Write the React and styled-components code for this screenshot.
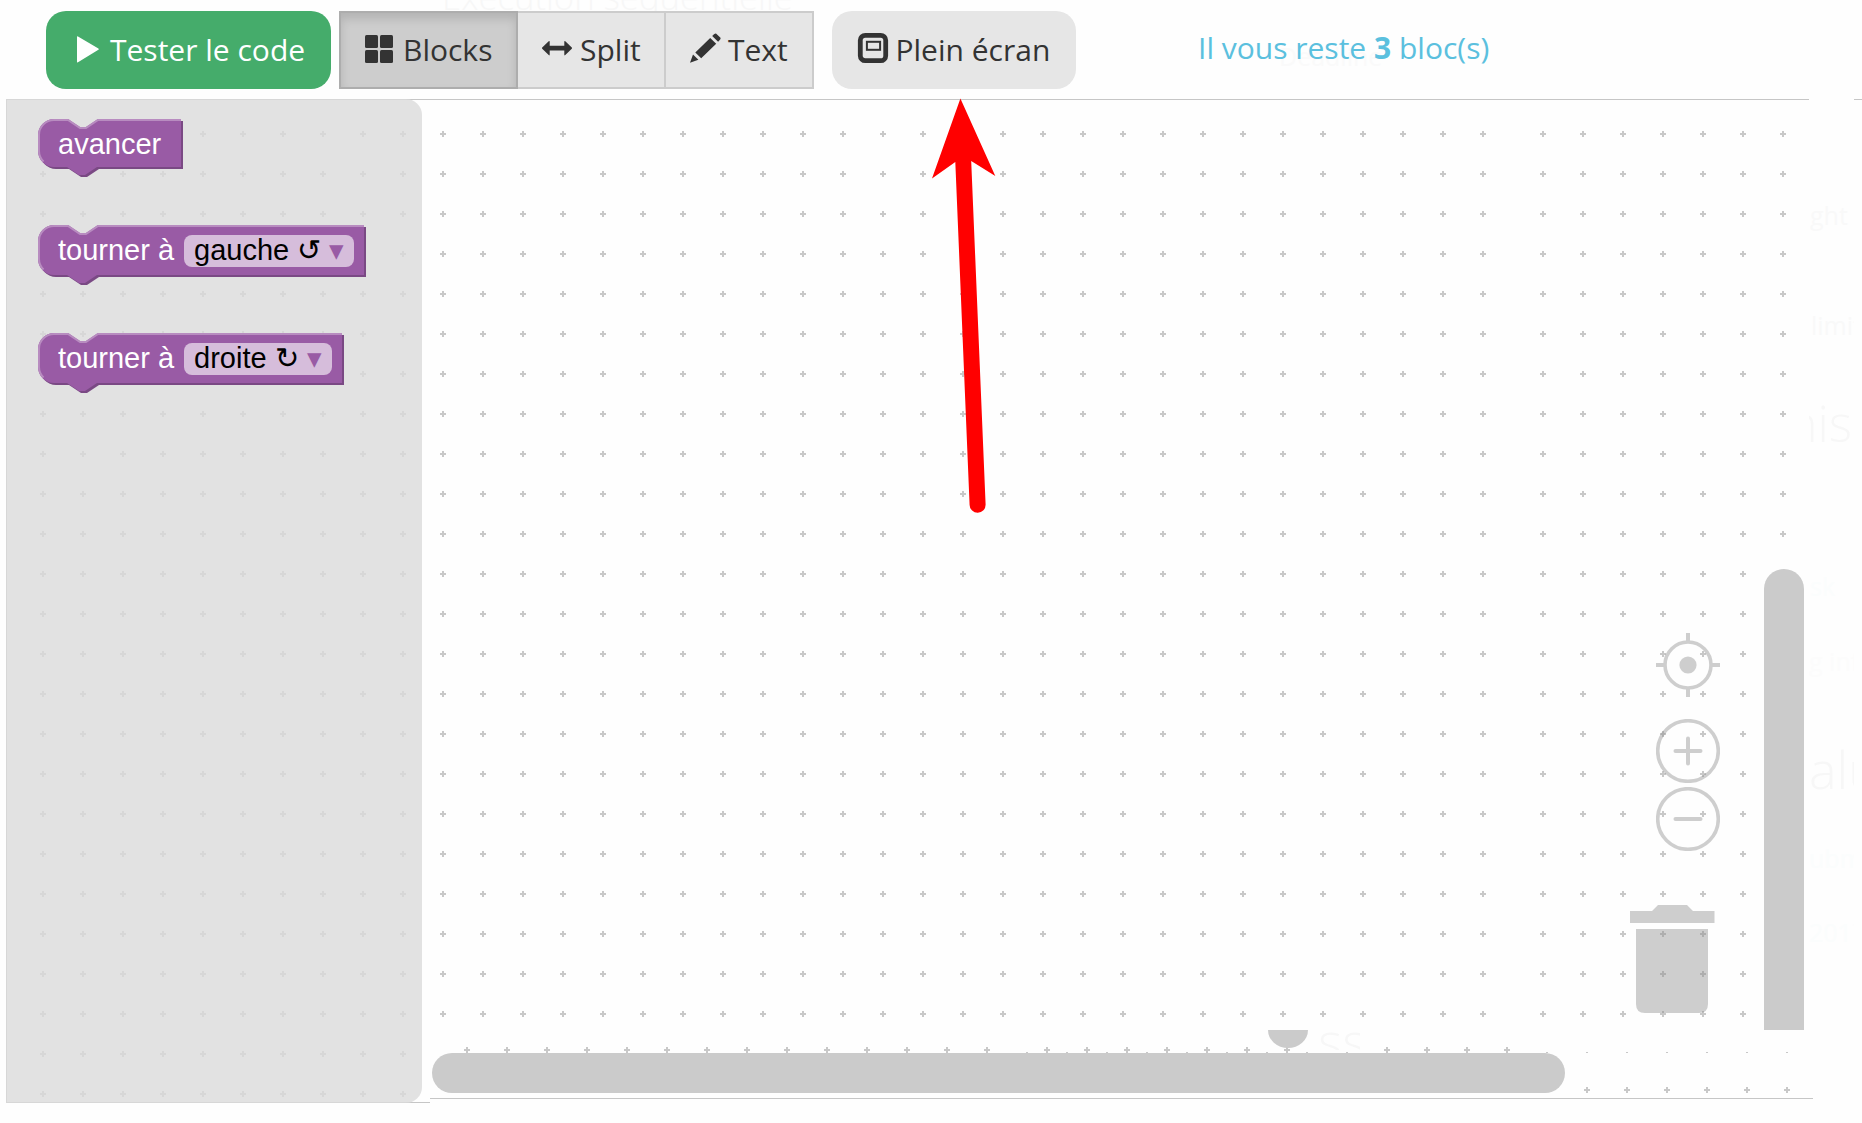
import React from "react";
import styled, { createGlobalStyle, css } from "styled-components";

const GlobalStyle = createGlobalStyle`
  body { margin: 0; background: #fefefe; }
  * { box-sizing: border-box; }
`;

const Page = styled.div`
  position: relative;
  display: flex;
  flex-direction: column;
  width: 1862px;
  height: 1123px;
  overflow: hidden;
  background: #fefefe;
  color: #333;
  font: 30px/42px "Open Sans", "Noto Sans", sans-serif;
`;

const Toolbar = styled.header`
  position: relative;
  display: flex;
  align-items: flex-start;
  height: 99px;
  padding: 11px 0 0 46px;
`;

const Button = styled.button`
  display: flex;
  align-items: center;
  gap: ${(p) => p.$gap || 8}px;
  width: ${(p) => p.$width}px;
  height: 78px;
  padding: 0 0 0 ${(p) => p.$pad}px;
  border: 0;
  font: inherit;
  white-space: nowrap;
  color: ${(p) => (p.$primary ? "#fff" : "#333")};
  background: ${(p) => (p.$primary ? "#45ac6b" : "#e6e6e6")};
  border-radius: 20px;
  svg { flex: none; overflow: visible; }
`;

const ButtonGroup = styled.div`
  display: flex;
  margin: 0 18px 0 8px;
`;

const GroupButton = styled(Button)`
  border: 2px solid #ccc;
  border-left-width: 0;
  border-radius: 0;
  ${(p) =>
    p.$active &&
    css`
      background: #cdcdcd;
      border: 2px solid #adadad;
      box-shadow: inset 0 6px 10px rgba(0, 0, 0, 0.125);
    `}
`;

const Remaining = styled.p`
  margin: 16px 0 0 122px;
  color: #5bc0de;
  white-space: nowrap;
`;

const Workspace = styled.main`
  position: relative;
  display: flex;
  height: 1004px;
  padding-left: 6px;
`;

const Grid = styled.svg`
  position: absolute;
  left: 0;
  top: 0;
`;

const Toolbox = styled.aside`
  position: relative;
  display: flex;
  flex-direction: column;
  gap: 46px;
  width: 416px;
  height: 1004px;
  padding: 20px 0 0 32px;
  border-radius: 0 16px 16px 0;
  background: rgba(219, 219, 219, 0.8);
`;

const BlockBox = styled.div`
  position: relative;
  display: flex;
  align-items: center;
  width: ${(p) => p.$w + 2}px;
  height: ${(p) => p.$h + 12}px;
  padding: 0 0 ${(p) => (p.$h === 50 ? 12 : 10)}px 20px;
  color: #fff;
  font: 29px/34px "Liberation Sans", Arial, sans-serif;
  white-space: pre;
  > svg { position: absolute; left: 0; top: 0; overflow: visible; }
`;

const Label = styled.span`
  position: relative;
`;

const Dropdown = styled.span`
  position: relative;
  width: ${(p) => p.$width}px;
  height: 32px;
  margin: 2px 0 0 10px;
  padding-left: 10px;
  line-height: 30px;
  border-radius: 8px;
  color: #000;
  background: #d6bddb;
`;

const Caret = styled.span`
  color: #995ba5;
`;

const Canvas = styled.section`
  position: relative;
  flex: 1;
  height: 1004px;
`;

const Controls = styled.div`
  position: absolute;
  left: 1208px;
  top: 534px;
  display: flex;
  flex-direction: column;
  align-items: flex-end;
  width: 90px;
  opacity: 0.4;
  svg { display: block; flex: none; }
`;

const ControlSlot = styled.div`
  margin-bottom: ${(p) => p.$after}px;
`;

const VerticalBar = styled.div`
  position: absolute;
  left: 1342px;
  top: 470px;
  width: 40px;
  height: 461px;
  border-radius: 20px 20px 0 0;
  background: #cbcbcb;
`;

const HorizontalBar = styled.div`
  position: absolute;
  left: 10px;
  top: 954px;
  width: 1133px;
  height: 40px;
  border-radius: 20px;
  background: #cbcbcb;
`;

const BarEnd = styled.div`
  position: absolute;
  left: 846px;
  top: 931px;
  width: 40px;
  height: 18px;
  border-radius: 0 0 20px 20px / 0 0 18px 18px;
  background: #cbcbcb;
`;

const Ghost = styled.span`
  position: absolute;
  left: ${(p) => p.$x}px;
  top: ${(p) => p.$y}px;
  width: ${(p) => p.$w}px;
  height: ${(p) => p.$h}px;
  overflow: hidden;
  display: flex;
  align-items: center;
  justify-content: ${(p) => (p.$end ? "flex-end" : "flex-start")};
  white-space: nowrap;
  color: ${(p) => p.$color || "#f7f7f7"};
  font-size: ${(p) => p.$size}px;
  font-weight: ${(p) => p.$weight || 400};
  line-height: ${(p) => p.$h}px;
`;

const Arrow = styled.svg`
  position: absolute;
  left: 925px;
  top: 95px;
`;

const PlayIcon = () => (
  <svg width="30" height="30" viewBox="0 0 30 30" fill="currentColor">
    <path d="M5 1.8Q5 .8 6 1.4L26.4 13.4Q27.4 14 26.4 14.7L6 27.2Q5 27.8 5 26.8Z" />
  </svg>
);

const BlocksIcon = () => (
  <svg width="30" height="30" viewBox="0 0 30 30" fill="currentColor">
    <rect x="0" y="0" width="13" height="13" rx="1.5" />
    <rect x="15" y="0" width="13" height="13" rx="1.5" />
    <rect x="0" y="15" width="13" height="13" rx="1.5" />
    <rect x="15" y="15" width="13" height="13" rx="1.5" />
  </svg>
);

const SplitIcon = () => (
  <svg width="30" height="30" viewBox="0 0 30 30" fill="currentColor">
    <path d="M.2 12.6 6.7 6.2Q7.7 5.4 7.7 6.8V10.8H22.3V6.8Q22.3 5.4 23.3 6.2L29.8 12.6Q30.3 13.2 29.8 13.8L23.3 20Q22.3 21 22.3 19.6V15.6H7.7V19.6Q7.7 21 6.7 20L.2 13.8Q-.3 13.2.2 12.6Z" />
  </svg>
);

const PencilIcon = () => (
  <svg width="30" height="30" viewBox="0 0 30 30" fill="currentColor">
    <path
      transform="translate(0 -1.2)"
      d="M0 29 3 20.6 8.4 26ZM5.3 18.8 20.2 4.2 26.2 9.9 11.2 24.5ZM22.2 2.3 24 .5Q25-.5 26-.4L30.5 4Q30.9 5 30 6L28.1 8Z"
    />
  </svg>
);

const ScreenIcon = () => (
  <svg width="30" height="30" viewBox="0 0 30 30" fill="none" stroke="currentColor">
    <rect x="2.3" y=".3" width="25.4" height="25.4" rx="5" strokeWidth="4.8" />
    <rect x="8.9" y="6.8" width="13.2" height="8" strokeWidth="2" />
  </svg>
);

function BlockShape({ w, h }) {
  const d = `M0 16A16 16 0 0 1 16 0H30l12 8h6l12-8H${w}V${h}H59l-12 8h-6l-12-8H16A16 16 0 0 1 0 ${h - 16}Z`;
  return (
    <svg width={w + 2} height={h + 12}>
      <path d={d} transform="translate(2 2)" fill="#7a4984" />
      <path d={d} fill="#995ba5" />
      <path
        d={`M5.5 ${h - 5.5}A15 15 0 0 1 1 ${h - 16}V16A15 15 0 0 1 16 1H30l12 8h6l12-8H${w}`}
        fill="none"
        stroke="#b88cc0"
        strokeWidth="2"
      />
    </svg>
  );
}

function Block({ w, h, label, option, fieldWidth }) {
  return (
    <BlockBox $w={w} $h={h}>
      <BlockShape w={w} h={h} />
      <Label>{label}</Label>
      {option && (
        <Dropdown $width={fieldWidth}>
          {option}
          <Caret> ▾</Caret>
        </Dropdown>
      )}
    </BlockBox>
  );
}

const range = (from, to) => {
  const out = [];
  for (let v = from; v <= to; v += 40) out.push(v);
  return out;
};

const cross = (x, y) => `M${x - 3} ${y - 1}h6v2h-6zM${x - 1} ${y - 3}h2v2h-2zM${x - 1} ${y + 1}h2v2h-2z`;
const dash = (x) => `M${x - 1} 953h2v1h-2z`;

const gridPath = [
  ...range(35, 995).flatMap((y) => range(43, 403).map((x) => cross(x, y))),
  ...range(35, 915).flatMap((y) => [...range(443, 1483), ...range(1543, 1783)].map((x) => cross(x, y))),
  ...[...range(467, 987), ...range(1047, 1287), ...range(1387, 1507)].map((x) => cross(x, 951)),
  ...range(1587, 1787).map((x) => cross(x, 991)),
  ...[...range(1027, 1347), ...range(1547, 1787)].map(dash),
].join("");

export default function App() {
  return (
    <Page>
      <GlobalStyle />
      <Ghost $x={442} $y={-30} $w={360} $h={54} $size={34.7} $weight={300}>Exécution séquentielle</Ghost>
      <Ghost $x={1279} $y={38} $w={110} $h={36} $size={25} $color="#fafafa">Deadline</Ghost>
      <Ghost $x={1810} $y={197} $w={44} $h={36} $size={25} $color="#f9f9f9">ght</Ghost>
      <Ghost $x={1811} $y={307} $w={43} $h={36} $size={25} $color="#f9f9f9">limit</Ghost>
      <Ghost $x={1809} $y={388} $w={43} $h={70} $size={50} $weight={300} $end>nis</Ghost>
      <Ghost $x={1809} $y={734} $w={45} $h={70} $size={52} $weight={300}>alu</Ghost>
      <Ghost $x={1809} $y={643} $w={45} $h={36} $size={25} $color="#fcfcfc">g info</Ghost>
      <Ghost $x={1810} $y={568} $w={44} $h={36} $size={25} $color="#fbfdfd">sk</Ghost>
      <Ghost $x={1809} $y={840} $w={45} $h={36} $size={25} $color="#fbfdfd">ubmi</Ghost>
      <Ghost $x={1809} $y={914} $w={45} $h={36} $size={25} $color="#fbfdfd">2017</Ghost>
      <Toolbar>
        <Button $primary $width={285} $pad={26}><PlayIcon />Tester le code</Button>
        <ButtonGroup>
          <GroupButton $active $width={179} $pad={24}><BlocksIcon />Blocks</GroupButton>
          <GroupButton $width={148} $pad={24}><SplitIcon />Split</GroupButton>
          <GroupButton $width={148} $pad={24}><PencilIcon />Text</GroupButton>
        </ButtonGroup>
        <Button $width={244} $pad={26} $gap={7.5}><ScreenIcon />Plein écran</Button>
        <Remaining>Il vous reste <b>3</b> bloc(s)</Remaining>
      </Toolbar>
      <Workspace>
        <Grid width="1862" height="1004">
          <path d={gridPath} fill="#c8c8c8" shapeRendering="crispEdges" />
          <path
            d="M6 0H1809v1H6zM1854 0h8v1h-8zM6 0h1v1004H6zM6 1003H430v1H6zM430 999H1813v1H430z"
            fill="#c6c6c6"
            shapeRendering="crispEdges"
          />
        </Grid>
        <Toolbox>
          <Block w={143} h={48} label="avancer" />
          <Block w={326} h={50} label="tourner à" option="gauche ↺" fieldWidth={170} />
          <Block w={304} h={50} label="tourner à" option="droite ↻" fieldWidth={148} />
        </Toolbox>
        <Canvas>
          <Ghost $x={896} $y={931} $w={42} $h={20} $size={52} $weight={300}>ss</Ghost>
          <Controls>
            <ControlSlot $after={22}>
              <svg width="64" height="64" viewBox="0 0 64 64" fill="none" stroke="#888" strokeWidth="4">
                <circle cx="32" cy="32" r="23" strokeWidth="3.6" />
                <circle cx="32" cy="32" r="8.6" fill="#888" stroke="none" />
                <path d="M32 0V8M32 56v8M0 32H8M56 32h8" />
              </svg>
            </ControlSlot>
            <ControlSlot $after={4}>
              <svg width="64" height="64" viewBox="0 0 64 64" fill="none" stroke="#888" strokeWidth="4" strokeLinecap="round">
                <circle cx="32" cy="32" r="30.3" strokeWidth="3.6" />
                <path d="M19.5 32h25M32 19.5v25" />
              </svg>
            </ControlSlot>
            <ControlSlot $after={54}>
              <svg width="64" height="64" viewBox="0 0 64 64" fill="none" stroke="#888" strokeWidth="4" strokeLinecap="round">
                <circle cx="32" cy="32" r="30.3" strokeWidth="3.6" />
                <path d="M19.5 32h25" />
              </svg>
            </ControlSlot>
            <svg width="90" height="108" viewBox="0 0 90 108" fill="#888">
              <path d="M0 6H22L28 0H57L63 6H84.5V18H0ZM6 24H78V99Q78 108 69 108H15Q6 108 6 99Z" />
            </svg>
          </Controls>
          <BarEnd />
          <VerticalBar />
          <HorizontalBar />
        </Canvas>
      </Workspace>
      <Arrow width="80" height="425" viewBox="925 95 80 425" fill="#f00">
        <path d="M960.4 98.5 995.3 176 971.2 161 985.6 504.5A8 8 0 0 1 969.6 505L955.3 162 932 178.5Z" />
      </Arrow>
    </Page>
  );
}
